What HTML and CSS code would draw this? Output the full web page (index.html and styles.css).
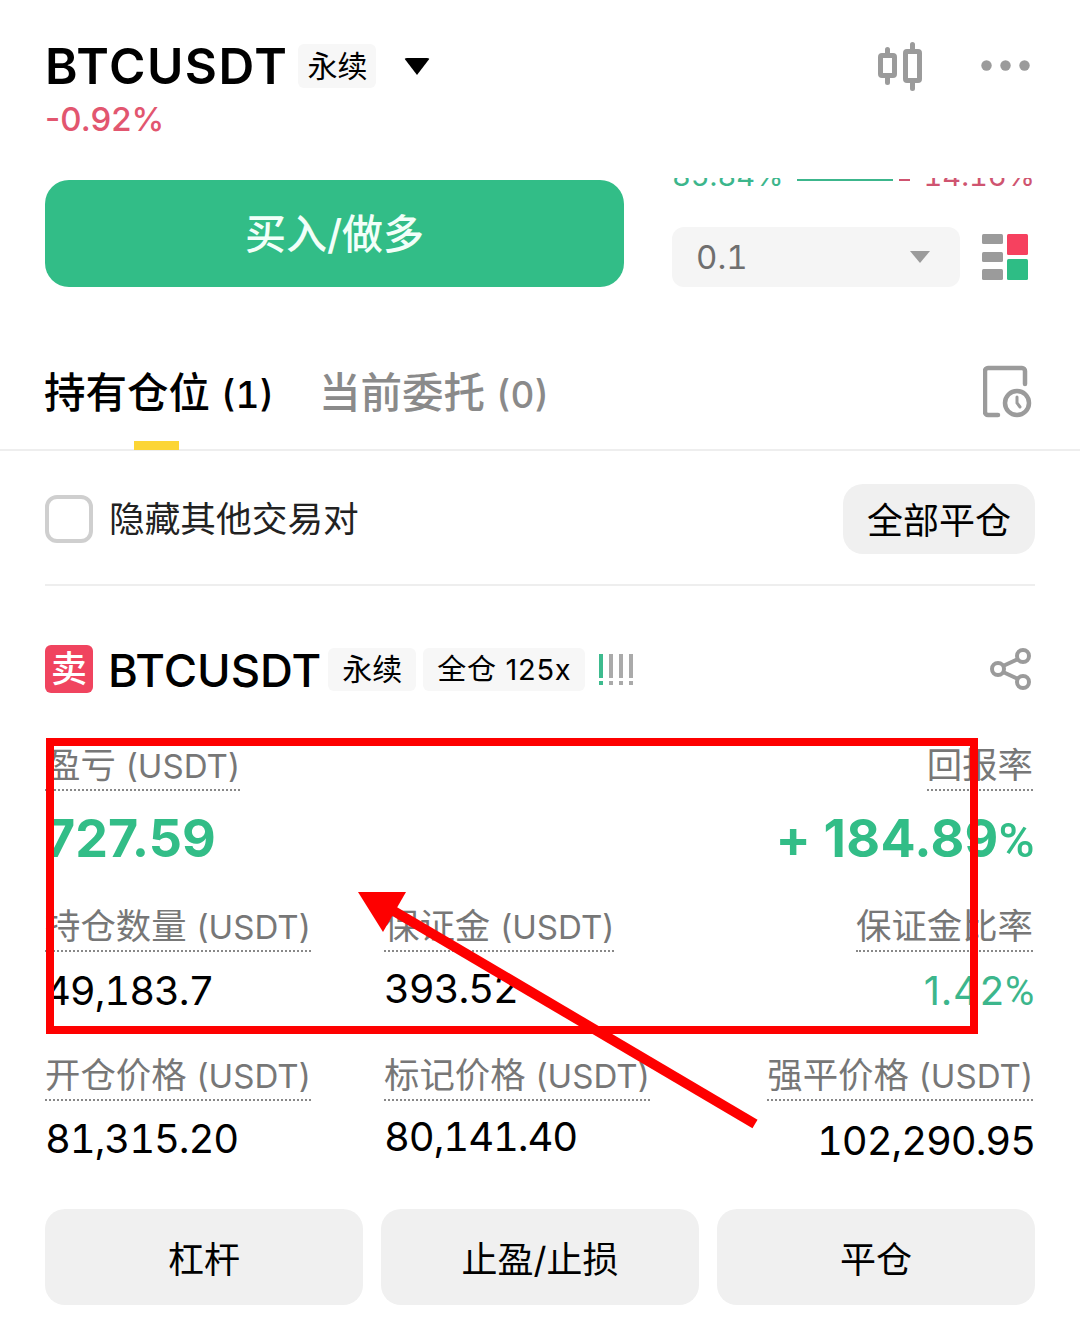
FILE: index.html
```html
<!DOCTYPE html>
<html lang="zh-CN">
<head>
  <meta charset="UTF-8">
  <title>BTCUSDT 永续</title>
  <link rel="stylesheet" href="styles.css">
</head>
<body>
  <div class="page">
    <header class="top">
      <div class="top-left">
        <div class="symbol-row">
          <span class="symbol">BTCUSDT</span>
          <span class="perp">永续</span>
          <span class="caret"></span>
        </div>
        <div class="change">-0.92%</div>
      </div>
      <div class="top-icons">
        <svg class="ico-candle" width="44" height="50" viewBox="0 0 44 50" fill="none" stroke="#9b9b9b" stroke-width="5" stroke-linecap="round">
          <rect x="2.5" y="13.5" width="14" height="20" rx="1.5"/>
          <path d="M9.5 7.5v6M9.5 33.5v7"/>
          <rect x="27.5" y="9.5" width="14" height="29" rx="1.5"/>
          <path d="M34.5 2.5v7M34.5 38.5v8"/>
        </svg>
        <svg class="ico-more" width="49" height="11" viewBox="0 0 49 11" fill="#9b9b9b">
          <circle cx="5.5" cy="5.5" r="5.2"/><circle cx="24.5" cy="5.5" r="5.2"/><circle cx="43.5" cy="5.5" r="5.2"/>
        </svg>
      </div>
    </header>

    <section class="trade">
      <button class="buy">买入/做多</button>
      <div class="trade-side">
        <div class="ratio">
          <span class="ratio-green">85.84%</span>
          <span class="ratio-bar"><i class="bar-green"></i><i class="bar-red"></i></span>
          <span class="ratio-red">14.16%</span>
        </div>
        <div class="depth">
          <div class="select"><span>0.1</span><i class="select-caret"></i></div>
          <svg width="46" height="46" viewBox="0 0 46 46">
            <rect x="0" y="0" width="21" height="10" rx="1.5" fill="#9b9b9b"/>
            <rect x="0" y="18" width="21" height="10" rx="1.5" fill="#9b9b9b"/>
            <rect x="0" y="35" width="21" height="11" rx="1.5" fill="#9b9b9b"/>
            <rect x="25" y="0" width="21" height="21" rx="1.5" fill="#f6415f"/>
            <rect x="25" y="25" width="21" height="21" rx="1.5" fill="#2ebd85"/>
          </svg>
        </div>
      </div>
    </section>

    <nav class="tabs">
      <div class="tab active">持有仓位 <b>(1)</b></div>
      <div class="tab">当前委托 <b>(0)</b></div>
      <svg class="ico-history" width="50" height="54" viewBox="0 0 50 54" fill="none" stroke="#9b9b9b" stroke-width="4.5" stroke-linecap="round">
        <path d="M15 50H5a3 3 0 0 1-3-3V6a3 3 0 0 1 3-3h34a3 3 0 0 1 3 3v13"/>
        <circle cx="34" cy="38" r="12"/>
        <path d="M34 32v6l3 4" stroke-width="3"/>
      </svg>
    </nav>

    <div class="filter">
      <label class="check"><i class="box"></i><span class="check-text">隐藏其他交易对</span></label>
      <button class="close-all">全部平仓</button>
    </div>

    <section class="position">
      <div class="pos-head">
        <span class="side">卖</span>
        <span class="pos-symbol">BTCUSDT</span>
        <span class="tag">永续</span>
        <span class="tag tag-wide">全仓 125x</span>
        <span class="signal"><i class="on"></i><i></i><i></i><i></i></span>
        <svg class="ico-share" width="42" height="42" viewBox="0 0 42 42" fill="none" stroke="#9b9b9b" stroke-width="4">
          <circle cx="8" cy="21" r="6"/><circle cx="33" cy="8" r="6"/><circle cx="33" cy="34" r="6"/>
          <path d="M13 18 28 11M13 24l15 7"/>
        </svg>
      </div>

      <div class="pnl-row">
        <div class="cell">
          <span class="label">盈亏 <span class="unit">(USDT)</span></span>
          <span class="big">727.59</span>
        </div>
        <div class="cell right">
          <span class="label">回报率</span>
          <span class="big big-pct">+ 184.89<span class="pct">%</span></span>
        </div>
      </div>

      <div class="stat-row">
        <div class="cell">
          <span class="label">持仓数量 <span class="unit">(USDT)</span></span>
          <span class="val">49,183.7</span>
        </div>
        <div class="cell mid">
          <span class="label">保证金 <span class="unit">(USDT)</span></span>
          <span class="val">393.52</span>
        </div>
        <div class="cell right">
          <span class="label">保证金比率</span>
          <span class="val green">1.42<span class="val-pct">%</span></span>
        </div>
      </div>

      <div class="stat-row stat-row-last">
        <div class="cell">
          <span class="label">开仓价格 <span class="unit">(USDT)</span></span>
          <span class="val">81,315.20</span>
        </div>
        <div class="cell mid">
          <span class="label">标记价格 <span class="unit">(USDT)</span></span>
          <span class="val">80,141.40</span>
        </div>
        <div class="cell right">
          <span class="label">强平价格 <span class="unit">(USDT)</span></span>
          <span class="val val-low">102,290.95</span>
        </div>
      </div>

      <div class="actions">
        <button>杠杆</button>
        <button>止盈/止损</button>
        <button>平仓</button>
      </div>
    </section>
  </div>

  <!-- red annotation drawn over the screenshot -->
  <svg class="markup" width="1080" height="1325" viewBox="0 0 1080 1325" fill="none">
    <rect x="50" y="742" width="924" height="288" stroke="#fe0000" stroke-width="8"/>
    <path d="M392 910 755 1124" stroke="#fe0000" stroke-width="10"/>
    <path d="M358 892H406L383 932Z" fill="#fe0000"/>
  </svg>
</body>
</html>
```

FILE: styles.css
```css
* {
  box-sizing: border-box;
}
body {
  margin: 0;
  background: #fff;
  color: #000;
  font-family: "Inter", "Noto Sans CJK SC", sans-serif;
}
button {
  border: none;
  font-family: inherit;
  color: #000;
}
.page {
  width: 1080px;
  height: 1325px;
  overflow: hidden;
}

/* top bar */
.top {
  height: 180px;
  padding: 38px 45px 0;
  display: flex;
  justify-content: space-between;
}
.symbol-row {
  display: flex;
  align-items: center;
  height: 56px;
}
.symbol {
  font-size: 49.5px;
  font-weight: 600;
  letter-spacing: 1.5px;
}
.perp {
  margin-left: 10px;
  width: 78px;
  height: 44px;
  background: #f7f7f7;
  border-radius: 6px;
  font-size: 30px;
  line-height: 44px;
  text-align: center;
}
.caret {
  margin-left: 28px;
  border-left: 13px solid transparent;
  border-right: 13px solid transparent;
  border-top: 17px solid #000;
  border-radius: 3px;
}
.change {
  margin-top: 3px;
  font-size: 33px;
  font-weight: 500;
  line-height: 44px;
  color: #e2566f;
}
.top-icons {
  display: flex;
  align-items: flex-start;
  padding-top: 4px;
  margin-right: 5px;
}
.ico-more {
  margin: 18px 0 0 59px;
}

/* buy button and depth */
.trade {
  display: flex;
  justify-content: space-between;
  height: 107px;
  padding: 0 45px;
}
.buy {
  width: 579px;
  height: 107px;
  padding-bottom: 6px;
  border-radius: 24px;
  background: #32bd87;
  color: #f2fff9;
  font-size: 41px;
  font-weight: 500;
}
.trade-side {
  width: 363px;
  margin-top: -2px;
}
.ratio {
  display: flex;
  align-items: flex-end;
  justify-content: space-between;
  height: 9px;
  overflow: hidden;
  font-size: 29px;
  line-height: 32px;
  font-variant-numeric: tabular-nums;
}
.ratio-green {
  margin-bottom: -5px;
  color: #3cb68c;
}
.ratio-red {
  margin-bottom: -5px;
  color: #cf5470;
}
.ratio-bar {
  display: flex;
  gap: 6px;
  width: 113px;
  height: 2px;
  margin: 0 0 6px 0;
}
.bar-green {
  width: 96px;
  background: #3cb68c;
}
.bar-red {
  width: 11px;
  background: #cf5470;
}
.depth {
  margin-top: 40px;
  display: flex;
  align-items: center;
  justify-content: space-between;
  padding-right: 7px;
}
.select {
  width: 288px;
  height: 60px;
  padding: 0 30px 0 24px;
  display: flex;
  align-items: center;
  justify-content: space-between;
  background: #f5f5f5;
  border-radius: 12px;
  color: #6f6f6f;
  font-size: 33px;
  font-variant-numeric: tabular-nums;
}
.select-caret {
  border-left: 10px solid transparent;
  border-right: 10px solid transparent;
  border-top: 12px solid #9b9b9b;
}

/* tabs */
.tabs {
  position: relative;
  margin-top: 56px;
  height: 108px;
  padding: 0 44px;
  display: flex;
  gap: 45px;
  align-items: center;
  border-bottom: 2px solid #eee;
}
.tab {
  position: relative;
  height: 108px;
  line-height: 102px;
  font-size: 41.5px;
  font-weight: 500;
  color: #8a8a8a;
}
.tab b {
  font-size: 37px;
  font-weight: 500;
  font-variant-numeric: tabular-nums;
}
.tab.active {
  color: #000;
}
.tab.active::after {
  content: "";
  position: absolute;
  left: 90px;
  bottom: 0;
  width: 45px;
  height: 9px;
  background: #fcd535;
}
.ico-history {
  margin: 0 3px 8px auto;
}

/* filter row */
.filter {
  margin: 0 45px;
  height: 135px;
  padding-top: 2px;
  display: flex;
  align-items: center;
  justify-content: space-between;
  border-bottom: 2px solid #eee;
}
.check {
  display: flex;
  align-items: center;
  gap: 16px;
  font-size: 35.7px;
  color: #222;
}
.check-text {
  margin-top: -4px;
}
.box {
  width: 48px;
  height: 48px;
  border: 4px solid #cfcfcf;
  border-radius: 12px;
}
.close-all {
  width: 192px;
  height: 70px;
  padding-bottom: 3px;
  border-radius: 20px;
  background: #f0f0f0;
  font-size: 36px;
}

/* position card */
.position {
  padding: 0 45px;
}
.pos-head {
  margin-top: 59px;
  height: 48px;
  display: flex;
  align-items: center;
}
.side {
  width: 48px;
  height: 48px;
  border-radius: 6px;
  background: #f0445f;
  color: #fff;
  font-size: 36px;
  font-weight: 500;
  line-height: 48px;
  text-align: center;
}
.pos-symbol {
  margin-left: 15px;
  padding-top: 2px;
  font-size: 45.5px;
  font-weight: 500;
}
.tag {
  margin-left: 7px;
  height: 43px;
  padding: 0 14px;
  background: #f7f7f7;
  border-radius: 6px;
  font-size: 30px;
  line-height: 43px;
}
.tag-wide {
  font-size: 29px;
  letter-spacing: 0.7px;
}
.signal {
  margin-left: 14px;
  display: flex;
  gap: 6px;
}
.signal i {
  width: 4px;
  height: 31px;
  background: linear-gradient(#aaa 0 76%, transparent 76% 86%, #aaa 86%);
}
.signal i.on {
  background: linear-gradient(#3dbb8e 0 76%, transparent 76% 86%, #3dbb8e 86%);
}
.ico-share {
  margin-left: auto;
  margin-right: 3px;
}
.pnl-row {
  margin-top: 52px;
  display: flex;
  justify-content: space-between;
}
.cell {
  display: flex;
  flex-direction: column;
  align-items: flex-start;
}
.cell.right {
  align-items: flex-end;
  margin-left: auto;
}
.cell.right .label {
  margin-right: 2px;
}
.label {
  padding-bottom: 2px;
  font-size: 35.4px;
  line-height: 42px;
  color: #777;
  border-bottom: 2px dotted #888;
}
.unit {
  font-size: 33.1px;
}
.big {
  margin-top: 18px;
  font-size: 52px;
  line-height: 60px;
  font-weight: 700;
  color: #32bd87;
}
.big-pct {
  letter-spacing: 0.3px;
}
.pct {
  font-family: "Roboto", sans-serif;
  font-size: 49px;
  font-weight: 500;
}
.stat-row {
  margin-top: 35px;
  display: flex;
}
.stat-row-last {
  margin-top: 39px;
}
.stat-row .cell:first-child {
  width: 339px;
}
.val {
  margin-top: 15px;
  font-size: 40px;
  line-height: 48px;
  font-variant-numeric: tabular-nums;
  letter-spacing: -1.1px;
}
.mid .val {
  margin-top: 13px;
}
.stat-row-last .val {
  margin-top: 14px;
}
.stat-row-last .mid .val {
  margin-top: 12px;
}
.stat-row-last .val-low {
  margin-top: 16px;
}
.val.green {
  color: #3cb68c;
  font-variant-numeric: normal;
  letter-spacing: 0.8px;
}
.val-pct {
  font-family: "Roboto", sans-serif;
}
.actions {
  margin-top: 44px;
  display: grid;
  grid-template-columns: repeat(3, 318px);
  gap: 18px;
}
.actions button {
  height: 96px;
  padding-bottom: 2px;
  border-radius: 20px;
  background: #f0f0f0;
  font-size: 36px;
}

/* annotation */
.markup {
  position: absolute;
  left: 0;
  top: 0;
  pointer-events: none;
}
```
